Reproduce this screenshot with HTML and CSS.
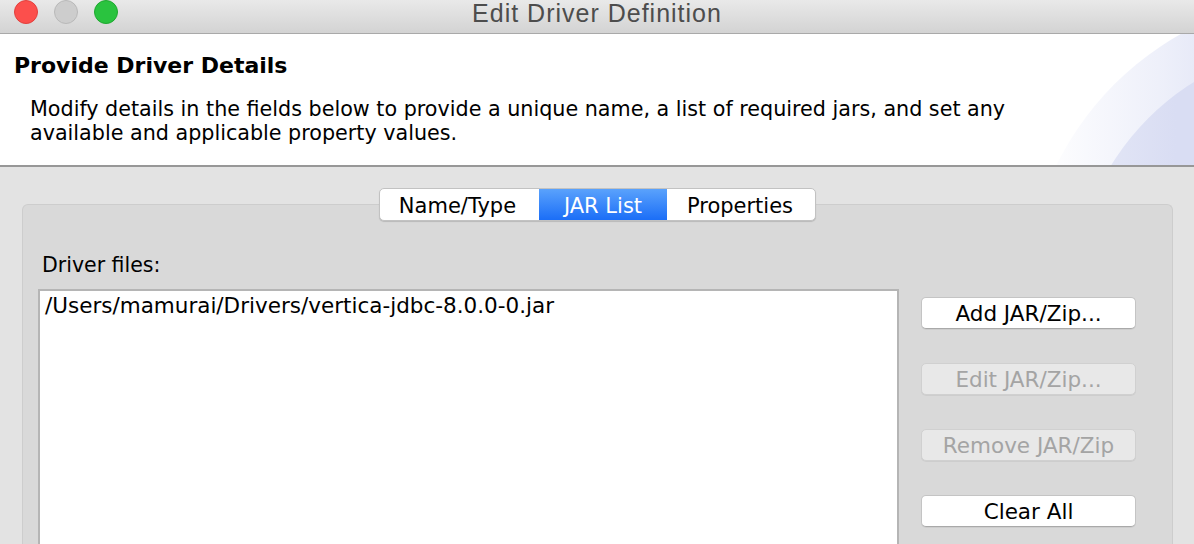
FILE: index.html
```html
<!DOCTYPE html>
<html>
<head>
<meta charset="utf-8">
<link rel="stylesheet" href="styles.css">
</head>
<body>
<div class="window">
  <div class="titlebar">
    <div class="lights">
      <span class="light red"></span>
      <span class="light gray"></span>
      <span class="light green"></span>
    </div>
    <div class="title">Edit Driver Definition</div>
  </div>
  <div class="header">
    <div class="deco"><div class="arc outer"></div><div class="arc inner"></div></div>
    <h1 class="head-title">Provide Driver Details</h1>
    <p class="head-desc">Modify details in the fields below to provide a unique name, a list of required jars, and set any available and applicable property values.</p>
  </div>
  <div class="main">
    <div class="tabs">
      <div class="seg">
        <span class="tab t1">Name/Type</span>
        <span class="tab t2 active">JAR List</span>
        <span class="tab t3">Properties</span>
      </div>
    </div>
    <div class="panel">
      <div class="label">Driver files:</div>
      <div class="row">
        <div class="list">
          <div class="item">/Users/mamurai/Drivers/vertica-jdbc-8.0.0-0.jar</div>
        </div>
        <div class="buttons">
          <button class="btn">Add JAR/Zip...</button>
          <button class="btn disabled">Edit JAR/Zip...</button>
          <button class="btn disabled">Remove JAR/Zip</button>
          <button class="btn">Clear All</button>
        </div>
      </div>
    </div>
  </div>
</div>
</body>
</html>
```
FILE: styles.css
```css
html, body {
  margin: 0;
  padding: 0;
}
body {
  width: 1194px;
  height: 544px;
  overflow: hidden;
  background: #e3e3e3;
  font-family: "DejaVu Sans", "Liberation Sans", sans-serif;
  color: #000;
}
.window {
  display: flex;
  flex-direction: column;
  height: 544px;
}
.titlebar {
  height: 33px;
  border-bottom: 1px solid #a9a9a9;
  background: linear-gradient(#e9e9e9, #d3d3d3);
  display: flex;
  align-items: center;
  position: relative;
  flex: none;
}
.lights {
  display: flex;
  gap: 16px;
  padding-left: 14px;
  margin-top: -9px;
}
.light {
  width: 24px;
  height: 24px;
  border-radius: 50%;
  box-sizing: border-box;
}
.light.red { background: #fc4f4c; border: 1px solid #e2403d; }
.light.gray { background: #cdcdcd; border: 1px solid #b9b9b9; }
.light.green { background: #2ac33f; border: 1px solid #1fa830; }
.title {
  position: absolute;
  left: 0;
  right: 0;
  top: 0;
  text-align: center;
  font-family: "Liberation Sans", Arial, sans-serif;
  font-size: 25px;
  letter-spacing: 1px;
  line-height: 27px;
  color: #4d4d4d;
}
.header {
  height: 131px;
  background: #fff;
  border-bottom: 2px solid #979797;
  position: relative;
  overflow: hidden;
  flex: none;
}
.deco {
  position: absolute;
  inset: 0;
}
.arc {
  position: absolute;
  border-radius: 50%;
}
.arc.outer {
  left: 1025px;
  top: -39px;
  width: 610px;
  height: 610px;
  background: linear-gradient(to right, #ffffff 2%, #eef0fa 22%, #e5e8f7 30%);
}
.arc.inner {
  left: 1073px;
  top: 9px;
  width: 514px;
  height: 514px;
  background: linear-gradient(to right, #e6e9f7, #d9ddf3 20%);
}
.head-title {
  position: relative;
  margin: 0;
  padding: 19px 0 0 14px;
  font-size: 22px;
  line-height: 26px;
  font-weight: bold;
}
.head-desc {
  position: relative;
  margin: 18px 0 0 30px;
  width: 1000px;
  font-size: 20.7px;
  line-height: 24px;
}
.main {
  padding: 21px 21px 0 22px;
  flex: 1;
  display: flex;
  flex-direction: column;
}
.tabs {
  display: flex;
  justify-content: center;
  position: relative;
  z-index: 1;
}
.seg {
  display: flex;
  background: #fff;
  border: 1px solid #c2c2c2;
  border-radius: 5px;
  box-shadow: 0 1px 1px rgba(0,0,0,0.15);
  overflow: hidden;
  height: 31px;
}
.tab {
  font-size: 21px;
  line-height: 35px;
  text-align: center;
  box-sizing: border-box;
}
.t1 { width: 159px; padding-right: 4px; }
.t2 { width: 128px; }
.t3 { width: 148px; padding-right: 2px; }
.tab.active {
  color: #fff;
  background: linear-gradient(#5aa2fc, #1b6ef7);
}
.panel {
  margin-top: -17px;
  background: #d9d9d9;
  border: 1px solid #cdcdcd;
  border-bottom: none;
  border-radius: 6px 6px 0 0;
  flex: 1;
  padding: 49px 36px 0 15px;
  display: flex;
  flex-direction: column;
}
.label {
  font-size: 20.5px;
  line-height: 22px;
  padding-left: 4px;
}
.row {
  display: flex;
  gap: 22px;
  margin-top: 13px;
  flex: 1;
}
.list {
  flex: 1;
  background: #fff;
  border: 2px solid #b5b5b5;
  border-bottom: none;
  padding: 4px 5px;
}
.item {
  font-size: 21.5px;
  line-height: 22px;
}
.buttons {
  width: 215px;
  display: flex;
  flex-direction: column;
  gap: 34px;
  padding-top: 8px;
}
.btn {
  height: 32px;
  background: #fff;
  border: 1px solid #c4c4c4;
  border-bottom-color: #a9a9a9;
  border-radius: 5px;
  box-shadow: 0 1px 0 rgba(0,0,0,0.05);
  font-family: "DejaVu Sans", sans-serif;
  font-size: 21.5px;
  line-height: 31px;
  color: #000;
  padding: 0;
}
.btn.disabled {
  background: #e8e8e8;
  border-color: #d0d0d0;
  color: #a4a4a4;
}
```
